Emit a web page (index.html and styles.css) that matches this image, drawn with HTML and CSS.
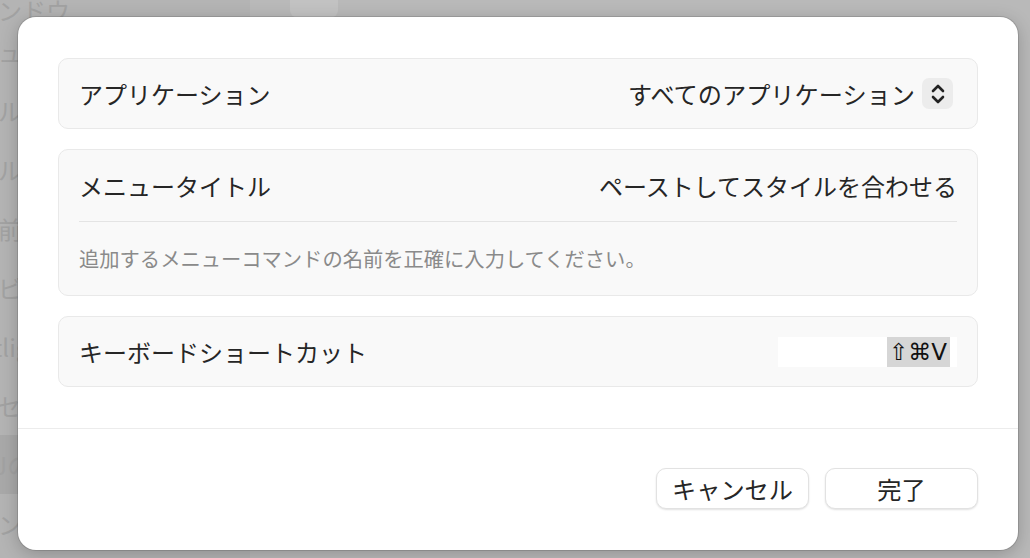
FILE: index.html
```html
<!DOCTYPE html>
<html lang="ja">
<head>
  <meta charset="UTF-8" />
  <title>キーボードショートカット</title>
  <link rel="stylesheet" href="styles.css">
</head>
<body>
  <div class="backdrop">
    <ul class="sidebar">
      <li><span>ウィンドウ</span></li>
      <li><span>メニューバー</span></li>
      <li><span>ツール</span></li>
      <li><span>ツール</span></li>
      <li><span>通知前オ</span></li>
      <li><span>サービス</span></li>
      <li><span>Spotlight</span></li>
      <li><span>アクセシ</span></li>
      <li class="selected"><span>AppJの</span></li>
      <li><span>ファンクションキー</span></li>
    </ul>
    <div class="main">
      <div class="tab"></div>
    </div>
  </div>

  <div class="dialog">
    <div class="body">
      <!-- アプリケーション -->
      <div class="card row">
        <span class="label">アプリケーション</span>
        <div class="popup">
          <span>すべてのアプリケーション</span>
          <span class="stepper">
            <svg width="16" height="22" viewBox="0 0 16 22"><path d="M3 8 8 3l5 5M3 14l5 5 5-5" fill="none" stroke="#222" stroke-width="2.6" stroke-linecap="round" stroke-linejoin="round"/></svg>
          </span>
        </div>
      </div>

      <!-- メニュータイトル -->
      <div class="card">
        <div class="row">
          <span class="label">メニュータイトル</span>
          <span class="value">ペーストしてスタイルを合わせる</span>
        </div>
        <div class="divider"></div>
        <p class="hint">追加するメニューコマンドの名前を正確に入力してください。</p>
      </div>

      <!-- ショートカット -->
      <div class="card row">
        <span class="label">キーボードショートカット</span>
        <div class="shortcut"><span class="keys">⇧⌘V</span></div>
      </div>
    </div>

    <div class="footer">
      <button type="button">キャンセル</button>
      <button type="button">完了</button>
    </div>
  </div>
</body>
</html>
```

FILE: styles.css
```css
html, body { margin: 0; height: 100%; }
body {
  font-family: "Noto Sans CJK JP", "Noto Sans", sans-serif;
  color: #262626;
  background: #ababab;
  overflow: hidden;
}

/* blurred window behind the sheet */
.backdrop { display: grid; grid-template-columns: 250px 1fr; height: 100%; }
.sidebar { list-style: none; margin: 0; padding: 0; background: #b4b4b4; overflow: hidden; }
.sidebar li { height: 59px; display: flex; align-items: center; font-size: 24px; color: #a2a2a2; white-space: nowrap; overflow: hidden; }
.sidebar li span { margin-left: -50px; }
.sidebar li:first-child { height: 30px; align-items: flex-start; margin-top: -8px; }
.sidebar li.selected { background: #a9a9a9; }
.main { background: #b9b9b9; position: relative; }
.tab { width: 48px; height: 18px; margin-left: 40px; background: #c2c2c2; border-radius: 0 0 8px 8px; }

/* the sheet */
.dialog {
  position: absolute; left: 18px; top: 17px;
  width: 1000px; height: 533px;
  background: #fff; border-radius: 18px;
  box-shadow: 0 0 0 1px rgba(0,0,0,.12), 0 4px 18px rgba(0,0,0,.22);
  display: flex; flex-direction: column;
}
.body { padding: 41px 40px 0; display: flex; flex-direction: column; gap: 20px; height: 412px; box-sizing: border-box; border-bottom: 1px solid #ececec; }

.card { background: #f9f9f9; border: 1px solid #e9e9e9; border-radius: 10px; padding: 0 20px; }
.row { display: flex; align-items: center; justify-content: space-between; height: 71px; }
.card.row { height: 71px; box-sizing: border-box; }
.label, .value { font-size: 24px; }
.divider { height: 1px; background: #e4e4e4; }
.hint { margin: 0; height: 73px; line-height: 73px; font-size: 20.3px; color: #8a8a8a; }

.popup { display: flex; align-items: center; gap: 7px; font-size: 24.2px; margin-right: 4px; }
.stepper { width: 31px; height: 31px; background: #ececec; border-radius: 7px; display: flex; align-items: center; justify-content: center; }

.shortcut { width: 179px; height: 30px; background: #fff; display: flex; justify-content: flex-end; }
.keys { background: #d6d6d6; font-family: "DejaVu Sans", sans-serif; font-size: 23px; line-height: 30px; padding: 0 3px 0 2px; margin-right: 7px; color: #111; }

.footer { display: flex; justify-content: flex-end; gap: 16px; padding: 39px 40px 0; }
.footer button {
  width: 153px; height: 41px; font-family: inherit; font-size: 24.2px; color: #262626;
  background: #fff; border: 1px solid #e2e2e2; border-radius: 10px;
  box-shadow: 0 1px 2px rgba(0,0,0,.12); padding: 0;
}
```
